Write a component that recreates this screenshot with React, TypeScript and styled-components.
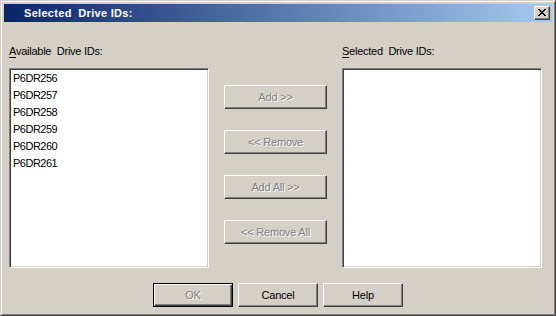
import React from 'react'
import styled, { createGlobalStyle, css } from 'styled-components'

const GlobalStyle = createGlobalStyle`
  html, body {
    margin: 0;
    padding: 0;
    overflow: hidden;
    background: #d4d0c8;
  }
  * {
    box-sizing: border-box;
  }
`

const available = ['P6DR256', 'P6DR257', 'P6DR258', 'P6DR259', 'P6DR260', 'P6DR261']

const CloseGlyph = () => (
  <svg width="8" height="7" viewBox="0 0 8 7" shapeRendering="crispEdges">
    <path
      fill="#000"
      d="M0 0h2v1H0zM6 0h2v1H6zM1 1h2v1H1zM5 1h2v1H5zM2 2h4v1H2zM3 3h2v1H3zM2 4h4v1H2zM1 5h2v1H1zM5 5h2v1H5zM0 6h2v1H0zM6 6h2v1H6z"
    />
  </svg>
)

const App = () => {
  return (
    <>
      <GlobalStyle />
      <Window>
        <Frame>
          <TitleBar>
            <Title>Selected&nbsp; Drive IDs:</Title>
            <CloseButton>
              <CloseGlyph />
            </CloseButton>
          </TitleBar>

          <Body>
            <Label>
              <u>A</u>vailable&nbsp; Drive IDs:
            </Label>
            <span />
            <Label>
              <u>S</u>elected&nbsp; Drive IDs:
            </Label>

            <ListBox>
              {available.map((id) => (
                <ListItem key={id}>{id}</ListItem>
              ))}
            </ListBox>

            <MoveColumn>
              <Button $wide disabled>Add &gt;&gt;</Button>
              <Button $wide disabled>&lt;&lt; Remove</Button>
              <Button $wide disabled>Add All &gt;&gt;</Button>
              <Button $wide disabled>&lt;&lt; Remove All</Button>
            </MoveColumn>

            <ListBox />
          </Body>

          <Footer>
            <Button $default disabled>OK</Button>
            <Button>Cancel</Button>
            <Button>Help</Button>
          </Footer>
        </Frame>
      </Window>
    </>
  )
}

const Window = styled.div`
  width: 556px;
  height: 316px;
  border: 1px solid;
  border-color: #d4d0c8 #404040 #404040 #d4d0c8;
  background: #d4d0c8;
  font-family: 'Liberation Sans', Arial, sans-serif;
  font-size: 11px;
  color: #000;
`

const Frame = styled.div`
  height: 100%;
  border: 1px solid;
  border-color: #ffffff #808080 #808080 #ffffff;
  padding: 2px;
  display: flex;
  flex-direction: column;
`

const TitleBar = styled.div`
  height: 18px;
  display: flex;
  align-items: center;
  justify-content: space-between;
  padding: 0 2px 0 20px;
  background: linear-gradient(to right, #0a246a, #a6caf0);
`

const Title = styled.div`
  color: #fff;
  font-weight: bold;
  font-size: 11px;
  letter-spacing: 0.3px;
  line-height: 18px;
  white-space: nowrap;
`

const CloseButton = styled.div`
  width: 16px;
  height: 14px;
  display: flex;
  align-items: center;
  justify-content: center;
  padding: 0 0 1px 0;
  background: #d4d0c8;
  border: 1px solid;
  border-color: #fff #404040 #404040 #fff;
  box-shadow: inset -1px -1px 0 #808080;
`

const Body = styled.div`
  display: grid;
  grid-template-columns: 200px 103px 200px;
  grid-template-rows: 13px 200px;
  column-gap: 15px;
  row-gap: 10px;
  padding: 23px 10px 0 5px;
`

const Label = styled.div`
  line-height: 13px;
  white-space: nowrap;
  letter-spacing: -0.25px;

  u {
    text-underline-offset: 2px;
  }
`

const ListBox = styled.div`
  background: #fff;
  border: 1px solid;
  border-color: #808080 #fff #fff #808080;
  box-shadow: inset 1px 1px 0 #404040, inset -1px -1px 0 #d4d0c8;
  padding: 1px 2px;
  display: flex;
  flex-direction: column;
`

const ListItem = styled.div`
  line-height: 17px;
  letter-spacing: -0.5px;
  padding-left: 1px;
`

const MoveColumn = styled.div`
  display: flex;
  flex-direction: column;
  gap: 21px;
  padding-top: 17px;
`

const Footer = styled.div`
  display: flex;
  justify-content: center;
  gap: 5px;
  margin-top: 15px;
`

const Button = styled.button<{ $wide?: boolean; $default?: boolean }>`
  width: ${(p) => (p.$wide ? '103px' : '80px')};
  height: 24px;
  padding: 0;
  margin: 0;
  background: #d4d0c8;
  font-family: 'Liberation Sans', Arial, sans-serif;
  font-size: 11px;
  letter-spacing: -0.2px;
  color: #000;
  border: 1px solid;
  border-color: #fff #404040 #404040 #fff;
  box-shadow: inset -1px -1px 0 #808080;

  ${(p) =>
    p.$default &&
    css`
      border-color: #000;
      box-shadow: inset 1px 1px 0 #fff, inset -1px -1px 0 #404040, inset -2px -2px 0 #808080;
    `}

  &:disabled {
    color: #808080;
    text-shadow: 1px 1px 0 #fff;
  }
`

export default App
